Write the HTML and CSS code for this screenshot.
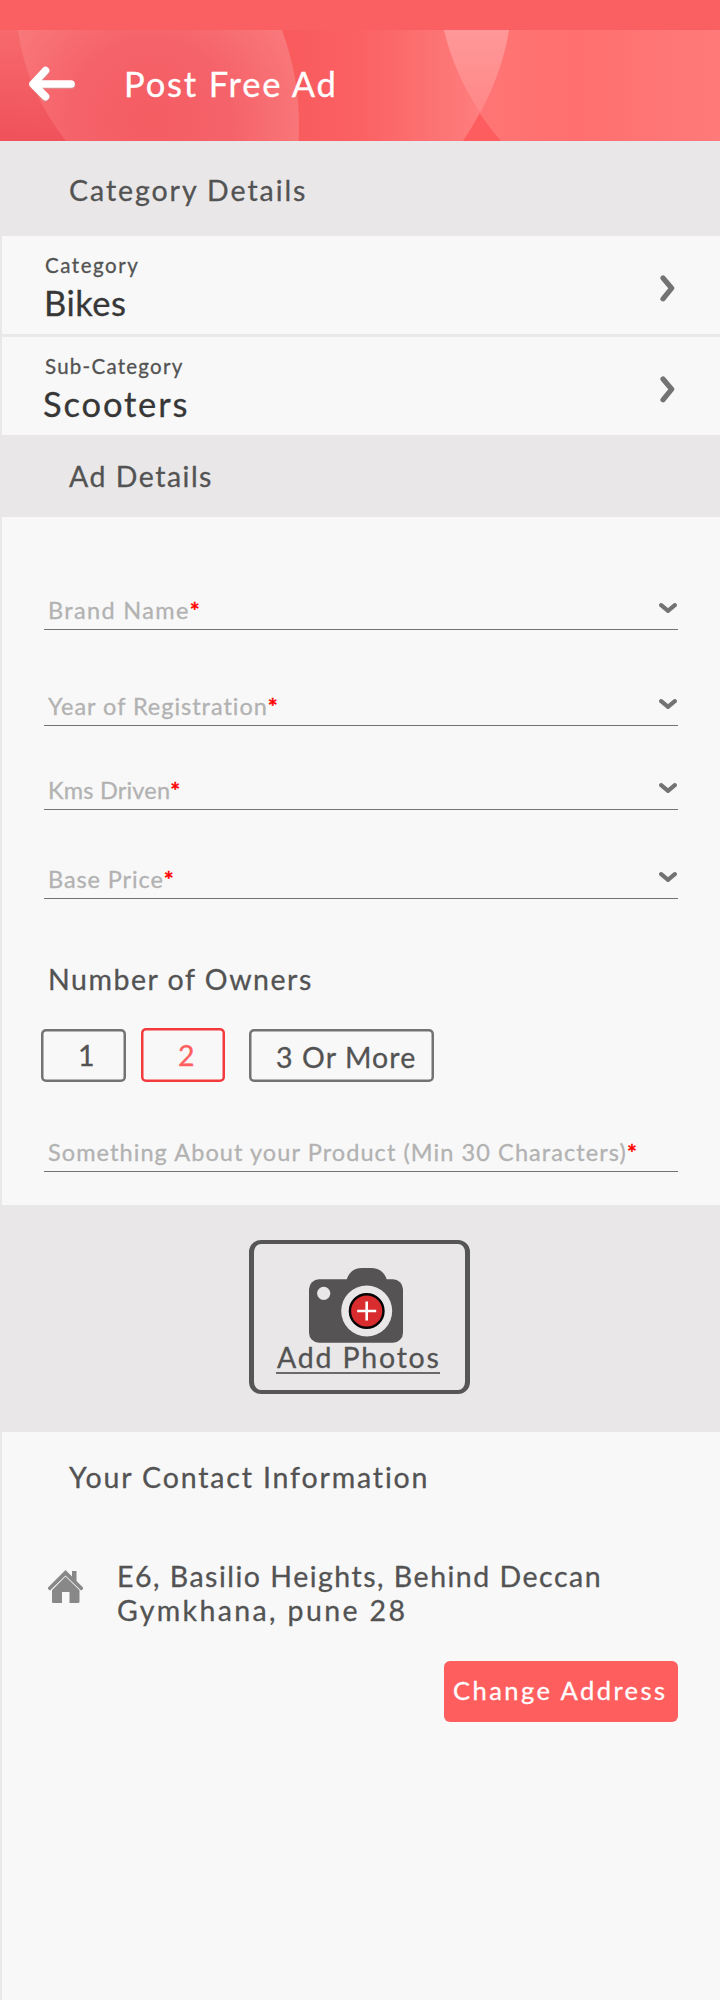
FILE: index.html
```html
<!DOCTYPE html>
<html lang="en">
<head>
<meta charset="utf-8">
<title>Post Free Ad</title>
<link rel="stylesheet" href="styles.css">
</head>
<body>
<svg class="defs" width="0" height="0" aria-hidden="true">
  <symbol id="right" viewBox="0 0 16 27"><path d="M3 3 L11.7 13.2 L3 23.8" fill="none" stroke="#737373" stroke-width="5.2" stroke-linecap="round" stroke-linejoin="round"/></symbol>
  <symbol id="down" viewBox="0 0 18 11"><path d="M2.2 2.2 L9 7.8 L15.8 2.2" fill="none" stroke="#737373" stroke-width="4.2" stroke-linecap="round" stroke-linejoin="round"/></symbol>
</svg>
<div class="status"></div>
<header class="header">
  <svg class="header-art" viewBox="0 0 720 111" width="720" height="111" aria-hidden="true">
    <defs>
      <linearGradient id="base" x1="0" y1="1" x2="0.05" y2="0"><stop offset="0" stop-color="#f0515a"/><stop offset="1" stop-color="#f6696c"/></linearGradient>
      <radialGradient id="a" gradientUnits="userSpaceOnUse" cx="150" cy="90" r="165"><stop offset="0" stop-color="#f45c62"/><stop offset="0.5" stop-color="#f5636a"/><stop offset="1" stop-color="#f97a7c"/></radialGradient>
      <linearGradient id="b" gradientUnits="userSpaceOnUse" x1="285" y1="0" x2="490" y2="0"><stop offset="0" stop-color="#f95b5d"/><stop offset="0.35" stop-color="#fb6062"/><stop offset="1" stop-color="#fe8080"/></linearGradient>
      <linearGradient id="c" gradientUnits="userSpaceOnUse" x1="460" y1="0" x2="720" y2="0"><stop offset="0" stop-color="#ff7676"/><stop offset="0.45" stop-color="#ff6f6f"/><stop offset="1" stop-color="#ff7a7a"/></linearGradient>
      <linearGradient id="o" x1="0" y1="0" x2="0" y2="1"><stop offset="0" stop-color="#ff9898"/><stop offset="1" stop-color="#ff8787"/></linearGradient>
    </defs>
    <rect width="720" height="111" fill="#fe5d5f"/>
    <rect width="100" height="111" fill="url(#base)"/>
    <path d="M280 0 H509 Q500 55 463 111 H280Z" fill="url(#b)"/>
    <path d="M444 0 Q455 58 501 111 H720 V0Z" fill="url(#c)"/>
    <path d="M444 0 H509 Q502 43 480 83 Q454 43 444 0Z" fill="url(#o)"/>
    <path d="M18 0 Q26 60 66 111 H298.500 Q302 55 282 0Z" fill="url(#a)"/>
  </svg>
  <svg class="back" viewBox="0 0 48 38" width="48" height="38" role="img" aria-label="Back">
    <g fill="none" stroke-linecap="round" stroke-linejoin="round" stroke-width="7.600">
      <path d="M5.500 20 H43.500 M17.500 6.500 L5.500 20 L17.500 32.500" stroke="#c9a5a7" opacity=".7"/>
      <path d="M5 19 H43 M17.500 5.500 L5 19 L17.500 31.500" stroke="#fff"/>
    </g>
  </svg>
  <h1 class="title">Post Free Ad</h1>
</header>

<main>
  <section class="band band-category"><h2 class="heading category-heading">Category Details</h2></section>
  <section class="panel picks">
    <div class="pick">
      <div><div class="label category-label">Category</div><div class="value bikes">Bikes</div></div>
      <svg class="go" width="16" height="27"><use href="#right"/></svg>
    </div>
    <div class="pick">
      <div><div class="label sub-label">Sub-Category</div><div class="value scooters">Scooters</div></div>
      <svg class="go" width="16" height="27"><use href="#right"/></svg>
    </div>
  </section>
  <section class="band band-ad"><h2 class="heading ad-heading">Ad Details</h2></section>
  <section class="panel form">
    <div class="field"><span class="hint brand">Brand Name</span><span class="star">*</span><svg class="drop" width="18" height="11"><use href="#down"/></svg></div>
    <div class="field field-year"><span class="hint year">Year of Registration</span><span class="star">*</span><svg class="drop" width="18" height="11"><use href="#down"/></svg></div>
    <div class="field field-kms"><span class="hint kms">Kms Driven</span><span class="star">*</span><svg class="drop" width="18" height="11"><use href="#down"/></svg></div>
    <div class="field field-price"><span class="hint price">Base Price</span><span class="star">*</span><svg class="drop" width="18" height="11"><use href="#down"/></svg></div>
    <h2 class="heading owners-heading">Number of Owners</h2>
    <div class="owners">
      <div class="owner one">1</div>
      <div class="owner two">2</div>
      <div class="owner more">3 Or More</div>
    </div>
    <div class="field field-about"><span class="hint about">Something About your Product (Min 30 Characters)</span><span class="star">*</span></div>
  </section>
  <section class="band photos">
    <div class="add">
      <svg class="camera" viewBox="0 0 94 75" width="94" height="75" aria-hidden="true">
        <rect y="11.300" width="94" height="63.500" rx="10" fill="#565354"/>
        <path d="M37.500 12 C40 4 45 0 53 0 H62 C70 0 75.500 4 78 12Z" fill="#565354"/>
        <circle cx="14.700" cy="25.300" r="6.600" fill="#e9e7e8"/>
        <circle cx="57.700" cy="43" r="25.500" fill="#e9e7e8"/>
        <circle cx="57.700" cy="43" r="16.800" fill="#d92c2f" stroke="#050505" stroke-width="2.400"/>
        <path d="M48.200 43 H67.200 M57.700 33.500 V52.500" stroke="#fff" stroke-width="2.600"/>
      </svg>
      <span class="add-text">Add Photos</span>
    </div>
  </section>
  <section class="panel contact">
    <h2 class="heading contact-heading">Your Contact Information</h2>
    <div class="address">
      <svg class="house" viewBox="0 0 35 33" width="35" height="33" aria-hidden="true">
        <g fill="#888">
          <path d="M24 1 H28.500 V12 H24Z"/>
          <path d="M17.500 0 L35 17.500 V19 L33 20.500 L17.500 5.600 L2 20.500 L0 19 V17.500Z"/>
          <path d="M17.500 6.600 L31.500 20.200 V31.500 Q31.500 33 30 33 H21.500 V22 H14 V33 H5 Q4 33 4 31.500 V20.200Z"/>
        </g>
      </svg>
      <div class="lines"><div class="line-one">E6, Basilio Heights, Behind Deccan</div><div class="line-two">Gymkhana, pune 28</div></div>
    </div>
    <div class="change">Change Address</div>
  </section>
</main>
</body>
</html>
```
FILE: styles.css
```css
* { box-sizing: border-box; }
body {
  margin: 0;
  width: 720px;
  background: #f8f8f8;
  color: #535353;
  font-family: Lato, "Liberation Sans", sans-serif;
  -webkit-text-stroke: .3px currentColor;
}
main { display: flex; flex-direction: column; min-height: 1859px; }
h1, h2 { margin: 0; font-weight: 400; }
.defs { display: block; height: 0; }
.heading { font-size: 28.5px; line-height: 34px; white-space: nowrap; }

.status { height: 30px; background: #fa5f61; }
.header {
  position: relative;
  display: flex;
  height: 111px;
  padding: 33px 0 0 28px;
  overflow: hidden;
}
.header-art { position: absolute; left: 0; top: 0; }
.back { position: relative; margin-top: 2px; }
.title {
  position: relative;
  margin: 1px 0 0 48px;
  color: #fff;
  font-size: 34.5px;
  line-height: 40px;
  letter-spacing: 1.83px;
}

.band { background: #e9e7e8; }
.panel { border-left: 2px solid #e9e8e9; background: #f8f8f8; }
.band-category { height: 95px; padding: 32px 0 0 69px; }
.category-heading { letter-spacing: 1.94px; }
.band-ad { height: 82px; padding: 24px 0 0 69px; }
.ad-heading { letter-spacing: 1.5px; }

.pick {
  display: flex;
  justify-content: space-between;
  height: 98px;
  padding: 17px 44px 0 43px;
}
.pick + .pick { height: 101px; border-top: 3px solid #e9e9e9; }
.label { font-size: 20.5px; line-height: 24px; }
.category-label { letter-spacing: 1.55px; }
.sub-label { letter-spacing: 1.25px; }
.value { margin-top: 6px; color: #373737; font-size: 34.5px; line-height: 40px; }
.bikes { margin-left: -1px; letter-spacing: .5px; }
.scooters { margin-left: -2px; letter-spacing: 1.85px; }
.go { margin-top: 22px; }

.form { height: 688px; padding: 78px 42px 0 42px; }
.field {
  display: flex;
  height: 35px;
  padding: 1px 1px 0 4px;
  border-bottom: 1px solid #737373;
  font-size: 23.5px;
  line-height: 28px;
  white-space: nowrap;
}
.field-year { margin-top: 61px; }
.field-kms { margin-top: 49px; }
.field-price { margin-top: 54px; }
.field-about { margin-top: 55px; }
.hint { color: #b2b2b2; }
.brand { letter-spacing: 1.35px; }
.year { letter-spacing: .97px; }
.kms { letter-spacing: .2px; }
.price { letter-spacing: .9px; }
.about { letter-spacing: 1.08px; }
.star { color: #f00; font-weight: 700; }
.drop { margin: 7px 0 0 auto; }

.owners-heading { margin-top: 63px; padding-left: 4px; letter-spacing: 1.53px; }
.owners { display: flex; align-items: flex-end; height: 54px; margin: 32px 0 0 -3px; }
.owner {
  height: 53px;
  border-radius: 5px;
  box-shadow: inset 0 0 0 2.5px #737373;
  font-size: 28.5px;
  line-height: 34px;
}
.one { width: 85px; padding: 9px 0 0 37px; }
.two {
  width: 84px;
  height: 54px;
  margin-left: 15px;
  padding: 10px 0 0 37px;
  box-shadow: inset 0 0 0 2.5px #f33a3d;
  color: #ff5f60;
}
.more { width: 185px; margin-left: 24px; padding: 11px 0 0 27px; letter-spacing: 1.1px; }

.photos { height: 227px; padding: 35px 0 0 249px; }
.add {
  display: flex;
  flex-direction: column;
  align-items: flex-start;
  width: 221px;
  height: 154px;
  padding-top: 24px;
  border: solid #565656;
  border-width: 4px 5px;
  border-radius: 12px;
}
.camera { flex: none; margin-left: 55px; }
.add-text {
  width: 164px;
  height: 33px;
  margin: -2px 0 0 22px;
  padding-left: 1px;
  border-bottom: 2px solid #6a6a6a;
  font-size: 28.5px;
  line-height: 33px;
  letter-spacing: 1.8px;
  white-space: nowrap;
}

.contact { flex: 1; padding: 28px 42px 0 46px; }
.contact-heading { padding-left: 21px; letter-spacing: 1.85px; }
.address { display: flex; gap: 34px; margin-top: 65px; }
.house { margin-top: 11px; }
.lines { font-size: 28.5px; line-height: 34px; white-space: nowrap; }
.line-one { letter-spacing: 1.5px; }
.line-two { letter-spacing: 2.38px; }
.change {
  width: 234px;
  height: 61px;
  margin: 34px 0 0 auto;
  padding: 12px 0 0 9px;
  border-radius: 6px;
  background: #ff5e5f;
  color: #fff;
  font-size: 25.5px;
  line-height: 34px;
  letter-spacing: 2.45px;
  white-space: nowrap;
}
```
